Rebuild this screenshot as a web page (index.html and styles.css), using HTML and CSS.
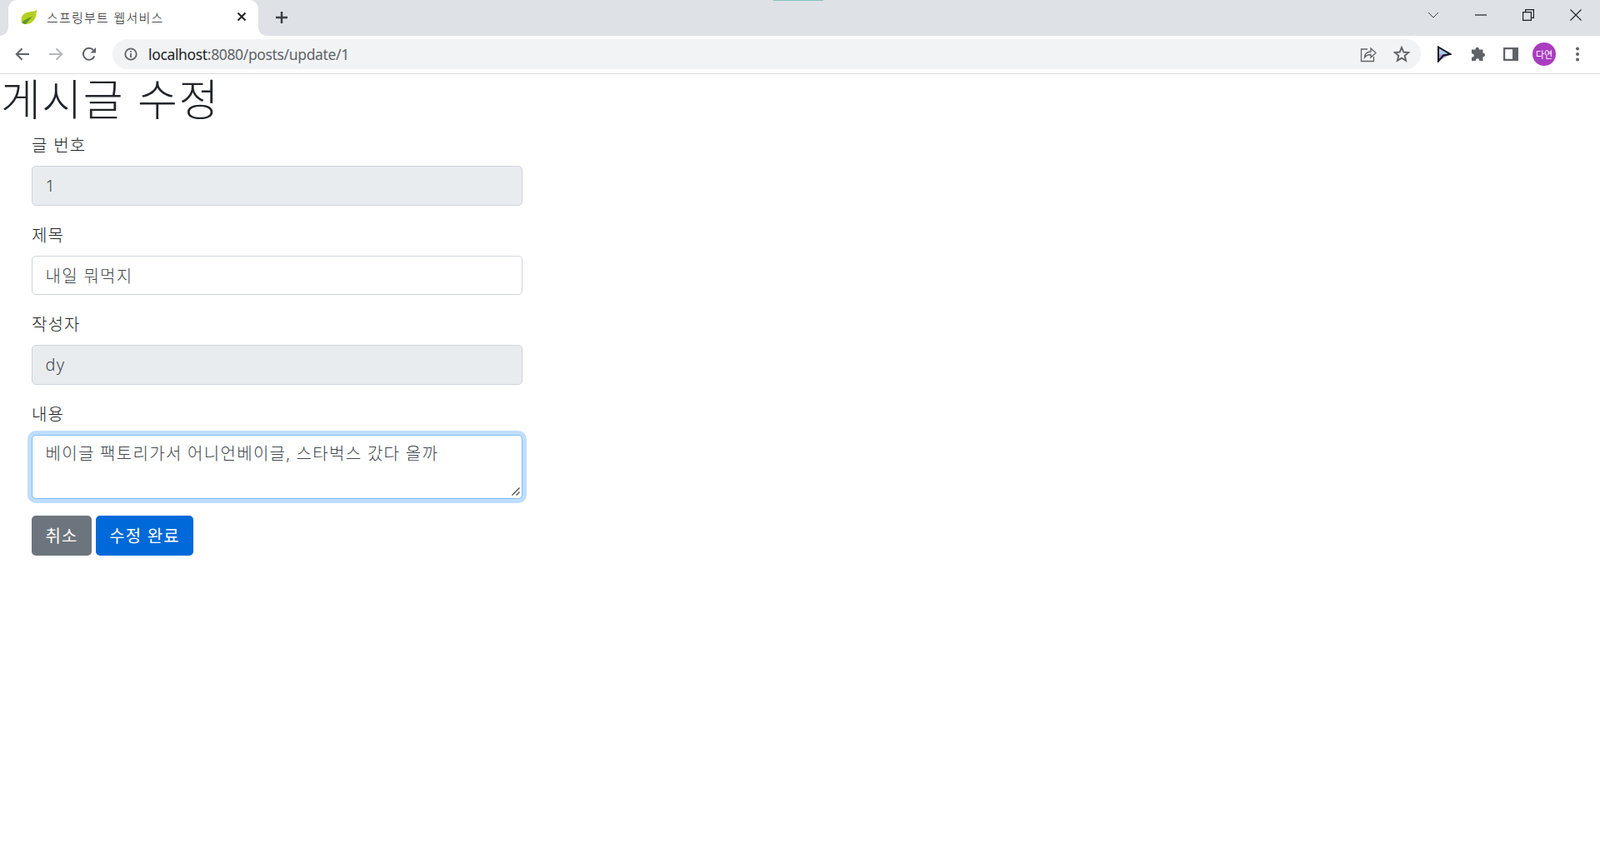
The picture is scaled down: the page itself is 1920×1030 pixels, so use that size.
FILE: index.html
```html
<!DOCTYPE html>
<html lang="ko">
<head>
<meta charset="utf-8">
<title>스프링부트 웹서비스</title>
<link rel="stylesheet" href="styles.css">
</head>
<body>
<div class="browser">
  <div class="tabstrip">
    <div class="tab">
      <svg class="favicon" viewBox="0 0 20 18" width="20" height="18"><path d="M20 0C19 2 18.800 3 18.600 4.500 18.500 11 14.500 17 7.500 18 3 18.500 .5 16.500 .5 13 .3 8 4 4.500 9 3.500 13 2.800 17 2.800 20 0Z" fill="#b7cf22"/><path d="M1.200 15.800C4.500 12.500 9 10.500 14.500 8.800 11 11.800 8.500 14.500 6 17.900 3.800 18.200 2.200 17.400 1.200 15.800Z" fill="#5f9a2c"/></svg>
      <span class="tab-title">스프링부트 웹서비스</span>
      <svg class="tab-close" viewBox="0 0 12 12" width="12" height="12"><path d="M1.500 1.500 10.500 10.500M10.500 1.500 1.500 10.500" stroke="#202124" stroke-width="2" fill="none"/></svg>
    </div>
    <svg class="newtab" viewBox="0 0 16 16" width="16" height="16"><path d="M8 1V15M1 8H15" stroke="#3c4043" stroke-width="2.500" fill="none"/></svg>
    <div class="strip-fill"><span class="loading-line"></span></div>
    <div class="winctl">
      <svg viewBox="0 0 14 8" width="14" height="8"><path d="M1 1 7 7 13 1" stroke="#3c4043" stroke-width="1" fill="none"/></svg>
    </div>
    <div class="winctl">
      <svg viewBox="0 0 14 2" width="14" height="2"><path d="M0 1H14" stroke="#202124" stroke-width="1.200" fill="none"/></svg>
    </div>
    <div class="winctl">
      <svg viewBox="0 0 14 14" width="14" height="14"><path d="M.6 3.600H10.400V13.400H.6ZM3.600 3.600V.6H13.400V10.400H10.400" stroke="#202124" stroke-width="1.200" fill="none"/></svg>
    </div>
    <div class="winctl">
      <svg viewBox="0 0 14 14" width="14" height="14"><path d="M.5 .5 13.500 13.500M13.500 .5 .5 13.500" stroke="#202124" stroke-width="1.100" fill="none"/></svg>
    </div>
  </div>
  <div class="toolbar">
    <div class="tool"><svg viewBox="0 0 18 16" width="18" height="16"><path d="M17 8H2M8.500 1.300 1.800 8 8.500 14.700" stroke="#5f6368" stroke-width="2" fill="none"/></svg></div>
    <div class="tool"><svg viewBox="0 0 18 16" width="18" height="16"><path d="M1 8H16M9.500 1.300 16.200 8 9.500 14.700" stroke="#b4b7ba" stroke-width="2" fill="none"/></svg></div>
    <div class="tool"><svg viewBox="0 0 18 18" width="18" height="18"><path d="M15.300 11.500A7 7 0 1 1 14 4" stroke="#5f6368" stroke-width="2" fill="none"/><path d="M10.500 7.500H17V1Z" fill="#5f6368"/></svg></div>
    <div class="omnibox">
      <svg class="info" viewBox="0 0 16 16" width="16" height="16"><circle cx="8" cy="8" r="6.700" stroke="#5f6368" stroke-width="1.800" fill="none"/><path d="M8 7V12M8 4V5.800" stroke="#5f6368" stroke-width="1.800" fill="none"/></svg>
      <span class="url"><span class="url-host">localhost</span>:8080/posts/update/1</span>
      <svg class="omni-icon" viewBox="0 0 20 20" width="20" height="20"><path d="M9 4H1.500V18.500H16.500V13M5.500 14C6 9.500 8.500 7 13 7V3L19 8.500 13 14V10.500C9.500 10.500 7.500 11.500 5.500 14Z" stroke="#5f6368" stroke-width="1.300" fill="none"/></svg>
      <svg class="omni-icon star" viewBox="0 0 20 20" width="20" height="20"><path d="M10 2 12.300 7.500 18.300 8 13.700 11.900 15.100 17.800 10 14.700 4.900 17.800 6.300 11.900 1.700 8 7.700 7.500Z" stroke="#5f6368" stroke-width="1.900" fill="none"/></svg>
    </div>
    <div class="tool"><svg viewBox="0 0 18 20" width="18" height="20"><path d="M2 1.500 16.500 10 2 18.500Z" fill="#a9c8ee"/><path d="M2 10H16.500L2 18.500Z" fill="#b79ad8"/><path d="M2 1.500 16.500 10 8 11.500 2 18.500Z" stroke="#10131c" stroke-width="2" fill="none"/></svg></div>
    <div class="tool"><svg viewBox="0 0 18 18" width="18" height="18"><path d="M6.500 3.500C6.500 1.500 7.500.8 8.700.8S11 1.500 11 3.500H15.500V7.800C17.500 7.800 18 8.800 18 10S17.500 12.200 15.500 12.200V17H11.200C11.200 15 10.200 14.300 9 14.300S6.800 15 6.800 17H2V12.800C4 12.800 4.700 11.800 4.700 10.500S4 8.200 2 8.200V3.500Z" fill="#5f6368"/></svg></div>
    <div class="tool"><svg viewBox="0 0 18 16" width="18" height="16"><path d="M0 0H18V16H0ZM2.200 2.200V13.800H11V2.200Z" fill="#5f6368" fill-rule="evenodd"/></svg></div>
    <div class="tool"><span class="avatar">다연</span></div>
    <div class="tool"><svg viewBox="0 0 4 18" width="4" height="18"><circle cx="2" cy="2.500" r="2" fill="#5f6368"/><circle cx="2" cy="9" r="2" fill="#5f6368"/><circle cx="2" cy="15.500" r="2" fill="#5f6368"/></svg></div>
  </div>
  <main class="page">
    <h1 class="title">게시글 수정</h1>
    <form class="edit-form">
      <div class="form-group">
        <label class="field-label" for="id">글 번호</label>
        <input class="form-control" id="id" type="text" value="1" readonly>
      </div>
      <div class="form-group">
        <label class="field-label" for="title">제목</label>
        <input class="form-control editable" id="title" type="text" value="내일 뭐먹지">
      </div>
      <div class="form-group">
        <label class="field-label" for="author">작성자</label>
        <input class="form-control" id="author" type="text" value="dy" readonly>
      </div>
      <div class="form-group">
        <label class="field-label" for="content">내용</label>
        <div class="textarea-wrap">
          <textarea class="form-control editable focused" id="content" rows="2">베이글 팩토리가서 어니언베이글, 스타벅스 갔다 올까</textarea>
          <svg class="resizer" viewBox="0 0 10 10" width="10" height="10"><path d="M9.500 .5 .5 9.500M9.500 5.500 5.500 9.500" stroke="#4a4a4a" stroke-width="1.300" fill="none"/></svg>
        </div>
      </div>
    </form>
    <div class="actions">
      <a class="btn btn-secondary">취소</a>
      <button class="btn btn-primary" type="button">수정 완료</button>
    </div>
  </main>
</div>
</body>
</html>
```
FILE: styles.css
```css
* { box-sizing: border-box; }
html, body { margin: 0; height: 100%; background: #fff; overflow: hidden; }
body { font-family: "Noto Sans", "Noto Sans CJK KR", sans-serif; color: #212529; }
.browser { display: flex; flex-direction: column; height: 100%; }

.tabstrip { display: flex; align-items: flex-start; height: 43px; padding-right: 1px; background: #dee1e6; flex: none; }
.tab { position: relative; display: flex; align-items: center; width: 300px; height: 43px; margin-left: 10px; padding: 0 14px 3px 15px; background: #fff; border-radius: 11px 11px 0 0; flex: none; }
.tab::before, .tab::after { content: ""; position: absolute; bottom: 0; width: 10px; height: 10px; background: radial-gradient(circle at 0 0, #dee1e6 9.500px, #fff 10px); }
.tab::before { left: -10px; }
.tab::after { right: -10px; transform: scaleX(-1); }
.favicon { flex: none; }
.tab-title { margin-left: 11px; flex: 1; font-size: 15px; letter-spacing: 1.200px; color: #202124; white-space: nowrap; font-family: "Noto Sans CJK KR", sans-serif; font-weight: 300; }
.tab-close { flex: none; }
.newtab { flex: none; margin: 13px 0 0 20px; }
.strip-fill { flex: 1; position: relative; height: 43px; }
.loading-line { position: absolute; top: 0; left: 582px; width: 60px; height: 1px; background: #7fc4bd; }
.winctl { flex: none; display: flex; align-items: center; justify-content: center; width: 57px; height: 36px; }

.toolbar { display: flex; align-items: center; height: 46px; padding: 0 7px 2px 7px; background: #fff; border-bottom: 1px solid #dadce0; flex: none; }
.tool { display: flex; align-items: center; justify-content: center; width: 40px; height: 36px; flex: none; }
.omnibox { display: flex; align-items: center; flex: 1; height: 36px; margin: 0 8px 0 8px; padding: 0 13px 0 14px; border-radius: 18px; background: #f1f3f4; }
.info { flex: none; }
.url { flex: 1; margin-left: 13px; font-size: 17.500px; color: #5f6368; white-space: nowrap; letter-spacing: -.35px; }
.url-host { color: #202124; }
.omni-icon { flex: none; margin-right: 20px; }
.omni-icon.star { margin-right: 0; }
.avatar { display: flex; align-items: center; justify-content: center; width: 28px; height: 28px; border-radius: 50%; background: #a93cc0; color: #fff; font-size: 11px; font-family: "Noto Sans CJK KR", sans-serif; }

.page { flex: 1; }
.title { margin: 0 0 10px; padding-left: 1px; font-size: 52px; line-height: 56px; height: 60px; letter-spacing: 1.500px; font-weight: 300; font-family: "Noto Sans CJK KR", sans-serif; }
.edit-form { width: 589px; margin-left: 38px; }
.form-group { margin-bottom: 20px; }
.field-label { display: block; margin-bottom: 10px; font-size: 20px; line-height: 30px; letter-spacing: 1.100px; font-weight: 300; font-family: "Noto Sans CJK KR", sans-serif; }
.form-control { display: block; width: 100%; height: 47.500px; padding: 7.500px 15.500px; font-family: "Noto Sans", "Noto Sans CJK KR", sans-serif; font-size: 20px; font-weight: 300; line-height: 30px; letter-spacing: 1.300px; color: #40464c; background: #e9ecef; border: 1.250px solid #ced4da; border-radius: 5px; outline: none; }
.form-control.editable { background: #fff; }
.textarea-wrap { position: relative; }
textarea.form-control { height: 77.500px; resize: none; }
.form-control.focused { border-color: #80bdff; box-shadow: 0 0 0 5px rgba(0, 123, 255, .25); }
.resizer { position: absolute; right: 3px; bottom: 4px; }

.actions { display: flex; gap: 5px; margin-left: 38px; }
.btn { display: inline-block; height: 47.500px; padding: 7.500px 15.400px; font-family: "Noto Sans CJK KR", sans-serif; font-size: 20px; line-height: 30px; letter-spacing: 1.100px; color: #fff; font-weight: 400; border: 1.250px solid transparent; border-radius: 5px; }
.btn-secondary { background: #6c757d; }
.btn-primary { background: #0069d9; }
```
